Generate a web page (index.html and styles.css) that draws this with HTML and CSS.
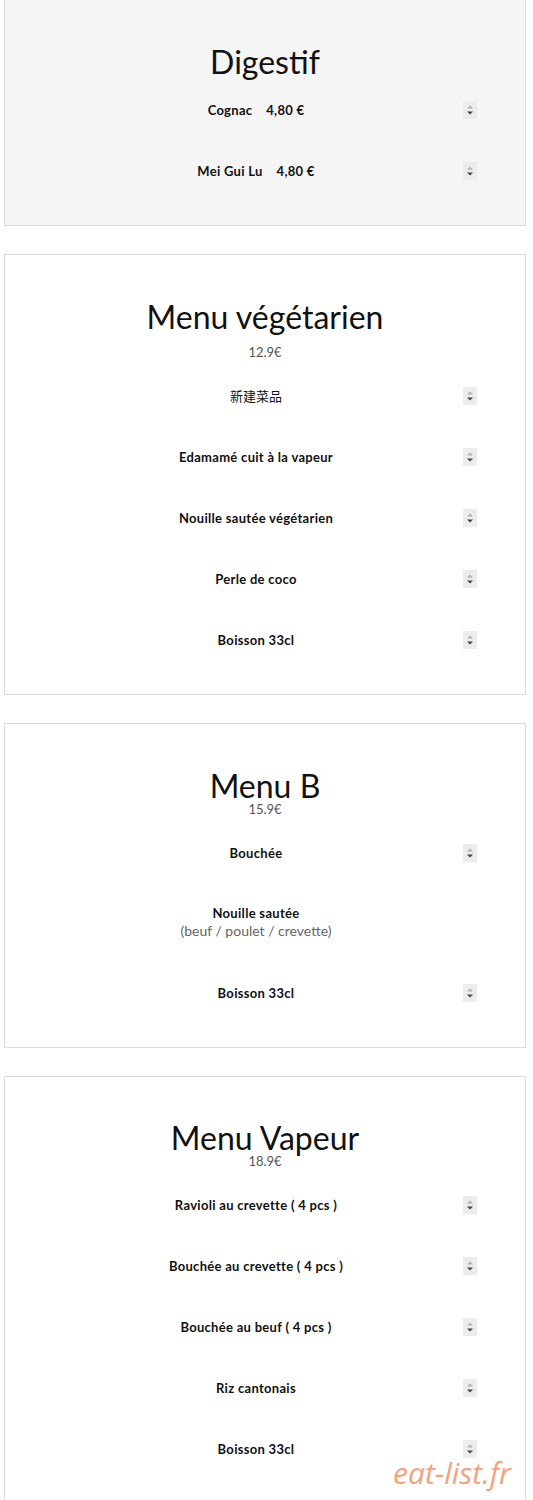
FILE: index.html
```html
<!DOCTYPE html>
<html lang="fr">
<head>
<meta charset="utf-8">
<title>Menus</title>
<link rel="stylesheet" href="styles.css">
</head>
<body>
<main class="page">
  <section class="card card-grey card-first">
    <h2 class="title">Digestif</h2>
    <div class="items items-tight">
      <div class="row"><span class="name">Cognac&nbsp;&nbsp;&nbsp; 4,80 €</span><span class="spin"><svg viewBox="0 0 14 18" width="14" height="18"><rect width="14" height="18" fill="#ececec"/><path d="M4 7.5 L7 4.5 L10 7.5 Z" fill="#b0b0b0"/><path d="M4 10.5 L10 10.5 L7 13.5 Z" fill="#444"/></svg></span></div>
      <div class="row"><span class="name">Mei Gui Lu&nbsp;&nbsp;&nbsp; 4,80 €</span><span class="spin"><svg viewBox="0 0 14 18" width="14" height="18"><rect width="14" height="18" fill="#ececec"/><path d="M4 7.5 L7 4.5 L10 7.5 Z" fill="#b0b0b0"/><path d="M4 10.5 L10 10.5 L7 13.5 Z" fill="#444"/></svg></span></div>
    </div>
  </section>

  <section class="card">
    <h2 class="title">Menu végétarien</h2>
    <p class="price price-spaced">12.9€</p>
    <div class="items">
      <div class="row"><span class="name cjk">新建菜品</span><span class="spin"><svg viewBox="0 0 14 18" width="14" height="18"><rect width="14" height="18" fill="#ececec"/><path d="M4 7.5 L7 4.5 L10 7.5 Z" fill="#b0b0b0"/><path d="M4 10.5 L10 10.5 L7 13.5 Z" fill="#444"/></svg></span></div>
      <div class="row"><span class="name">Edamamé cuit à la vapeur</span><span class="spin"><svg viewBox="0 0 14 18" width="14" height="18"><rect width="14" height="18" fill="#ececec"/><path d="M4 7.5 L7 4.5 L10 7.5 Z" fill="#b0b0b0"/><path d="M4 10.5 L10 10.5 L7 13.5 Z" fill="#444"/></svg></span></div>
      <div class="row"><span class="name">Nouille sautée végétarien</span><span class="spin"><svg viewBox="0 0 14 18" width="14" height="18"><rect width="14" height="18" fill="#ececec"/><path d="M4 7.5 L7 4.5 L10 7.5 Z" fill="#b0b0b0"/><path d="M4 10.5 L10 10.5 L7 13.5 Z" fill="#444"/></svg></span></div>
      <div class="row"><span class="name">Perle de coco</span><span class="spin"><svg viewBox="0 0 14 18" width="14" height="18"><rect width="14" height="18" fill="#ececec"/><path d="M4 7.5 L7 4.5 L10 7.5 Z" fill="#b0b0b0"/><path d="M4 10.5 L10 10.5 L7 13.5 Z" fill="#444"/></svg></span></div>
      <div class="row"><span class="name">Boisson 33cl</span><span class="spin"><svg viewBox="0 0 14 18" width="14" height="18"><rect width="14" height="18" fill="#ececec"/><path d="M4 7.5 L7 4.5 L10 7.5 Z" fill="#b0b0b0"/><path d="M4 10.5 L10 10.5 L7 13.5 Z" fill="#444"/></svg></span></div>
    </div>
  </section>

  <section class="card">
    <h2 class="title">Menu B</h2>
    <p class="price">15.9€</p>
    <div class="items">
      <div class="row"><span class="name">Bouchée</span><span class="spin"><svg viewBox="0 0 14 18" width="14" height="18"><rect width="14" height="18" fill="#ececec"/><path d="M4 7.5 L7 4.5 L10 7.5 Z" fill="#b0b0b0"/><path d="M4 10.5 L10 10.5 L7 13.5 Z" fill="#444"/></svg></span></div>
      <div class="row"><span class="name">Nouille sautée<span class="sub">(beuf / poulet / crevette)</span></span></div>
      <div class="row"><span class="name">Boisson 33cl</span><span class="spin"><svg viewBox="0 0 14 18" width="14" height="18"><rect width="14" height="18" fill="#ececec"/><path d="M4 7.5 L7 4.5 L10 7.5 Z" fill="#b0b0b0"/><path d="M4 10.5 L10 10.5 L7 13.5 Z" fill="#444"/></svg></span></div>
    </div>
  </section>

  <section class="card card-last">
    <h2 class="title">Menu Vapeur</h2>
    <p class="price">18.9€</p>
    <div class="items">
      <div class="row"><span class="name">Ravioli au crevette ( 4 pcs )</span><span class="spin"><svg viewBox="0 0 14 18" width="14" height="18"><rect width="14" height="18" fill="#ececec"/><path d="M4 7.5 L7 4.5 L10 7.5 Z" fill="#b0b0b0"/><path d="M4 10.5 L10 10.5 L7 13.5 Z" fill="#444"/></svg></span></div>
      <div class="row"><span class="name">Bouchée au crevette ( 4 pcs )</span><span class="spin"><svg viewBox="0 0 14 18" width="14" height="18"><rect width="14" height="18" fill="#ececec"/><path d="M4 7.5 L7 4.5 L10 7.5 Z" fill="#b0b0b0"/><path d="M4 10.5 L10 10.5 L7 13.5 Z" fill="#444"/></svg></span></div>
      <div class="row"><span class="name">Bouchée au beuf ( 4 pcs )</span><span class="spin"><svg viewBox="0 0 14 18" width="14" height="18"><rect width="14" height="18" fill="#ececec"/><path d="M4 7.5 L7 4.5 L10 7.5 Z" fill="#b0b0b0"/><path d="M4 10.5 L10 10.5 L7 13.5 Z" fill="#444"/></svg></span></div>
      <div class="row"><span class="name">Riz cantonais</span><span class="spin"><svg viewBox="0 0 14 18" width="14" height="18"><rect width="14" height="18" fill="#ececec"/><path d="M4 7.5 L7 4.5 L10 7.5 Z" fill="#b0b0b0"/><path d="M4 10.5 L10 10.5 L7 13.5 Z" fill="#444"/></svg></span></div>
      <div class="row"><span class="name">Boisson 33cl</span><span class="spin"><svg viewBox="0 0 14 18" width="14" height="18"><rect width="14" height="18" fill="#ececec"/><path d="M4 7.5 L7 4.5 L10 7.5 Z" fill="#b0b0b0"/><path d="M4 10.5 L10 10.5 L7 13.5 Z" fill="#444"/></svg></span></div>
    </div>
  </section>
</main>
<div class="watermark">eat-list.fr</div>
</body>
</html>
```

FILE: styles.css
```css
html, body {
  margin: 0;
  padding: 0;
  background: #ffffff;
}

body {
  font-family: Lato, "Noto Sans", "Noto Sans CJK SC", sans-serif;
  color: #111;
  width: 533px;
  height: 1500px;
  overflow: hidden;
  position: relative;
}

.page {
  display: flex;
  flex-direction: column;
  gap: 28px;
  margin: 0 7px 0 4px;
}

.card {
  background: #ffffff;
  border: 1px solid #dcdcdc;
  padding: 46px 0 23px;
  text-align: center;
}

.card-grey {
  background: #f5f5f5;
}

.card-first {
  margin-top: -1px;
  border-top-color: transparent;
}

.card-last {
  padding-top: 45px;
  padding-bottom: 60px;
}

.title {
  margin: 0;
  font-size: 32px;
  line-height: 32px;
  font-weight: 400;
  color: #111;
}

.price {
  margin: 0;
  font-size: 13px;
  line-height: 14px;
  color: #555;
}

.price-spaced {
  margin-top: 12px;
}

.items {
  display: flex;
  flex-direction: column;
  margin-top: 7px;
}

.items-tight {
  margin-top: 2px;
}

.row {
  display: grid;
  grid-template-columns: 1fr auto 1fr;
  align-items: center;
  padding: 21px 18px 22px 0;
}

.name {
  grid-column: 2;
  font-size: 13px;
  line-height: 16px;
  font-weight: 700;
  letter-spacing: 0.3px;
  color: #111;
}

.cjk {
  font-family: "Noto Sans CJK SC", sans-serif;
  font-weight: 400;
  font-size: 13px;
  letter-spacing: 0;
}

.sub {
  display: block;
  font-size: 14px;
  line-height: 20px;
  font-weight: 400;
  letter-spacing: 0;
  color: #666;
}

.spin {
  grid-column: 3;
  justify-self: end;
  margin-right: 30px;
  display: flex;
}

.watermark {
  position: absolute;
  left: 393px;
  top: 1453px;
  font-family: "Open Sans", sans-serif;
  font-style: italic;
  font-size: 30px;
  line-height: 40px;
  color: #f4a27e;
}
```
